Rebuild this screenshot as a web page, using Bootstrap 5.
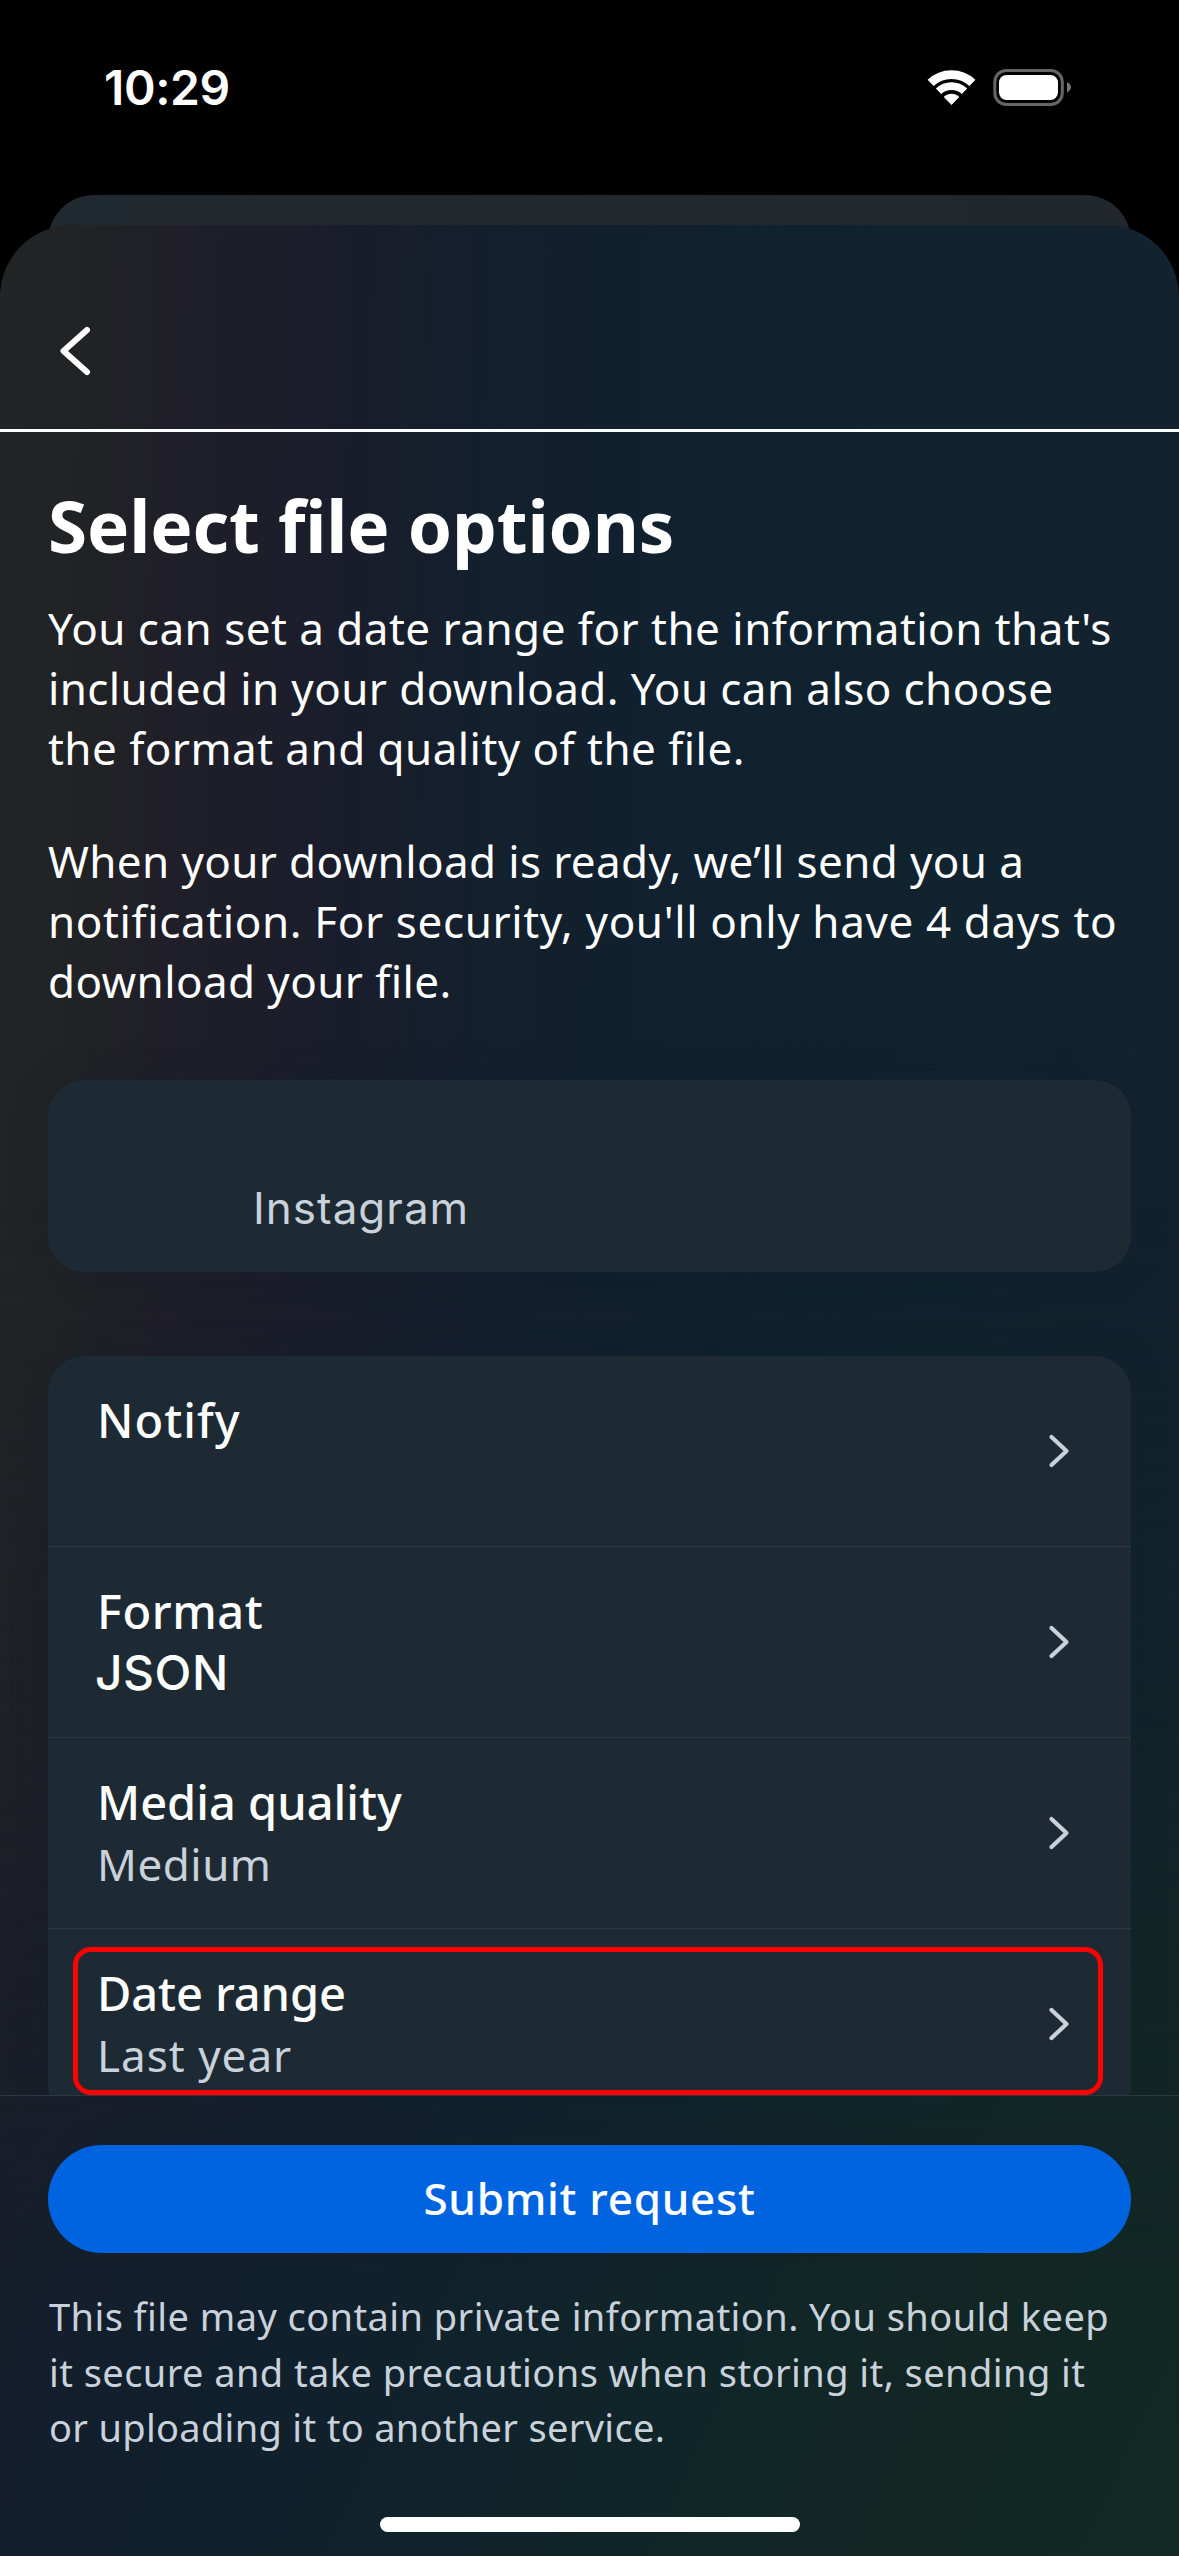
<!DOCTYPE html>
<html lang="en">
<head>
<meta charset="utf-8">
<meta name="viewport" content="width=device-width, initial-scale=1">
<title>Select file options</title>
<link href="https://cdn.jsdelivr.net/npm/bootstrap@5.3.0/dist/css/bootstrap.min.css" rel="stylesheet">
<style>
  body { background: #000; color: #fff; font-family: "Noto Sans", "Open Sans", sans-serif; }
  .phone { width: 1179px; height: 2556px; }
  .status { height: 195px; padding: 58px 106px 0 104px; }
  .clock { font: 600 48px/60px Inter, sans-serif; letter-spacing: -.4px; }
  .status svg { margin-top: 9px; }
  .peek { height: 120px; margin: 0 48px -90px; border-radius: 46px 46px 0 0; background: linear-gradient(90deg, #20292f, #22272d); }
  .sheet {
    border-radius: 72px 72px 0 0; isolation: isolate;
    background: linear-gradient(91deg, #212525 0, #212225 8%, #201f29 14%, #1a1d2b 28%, #13202e 42%, #10212f 62%, #10232e 78%, #13222f 100%);
  }
  .sheet::before {
    content: ""; position: absolute; inset: 0; z-index: -1;
    background: linear-gradient(115deg, #1d1e28 20%, #1a1d2a 36%, #111f2d 52%, #10222c 64%, #102528 74%, #122724 86%, #122825 100%);
    -webkit-mask-image: linear-gradient(180deg, transparent 42%, #000 88%);
    mask-image: linear-gradient(180deg, transparent 42%, #000 88%);
  }
  .top-bar { height: 207px; border-bottom: 3px solid #fafcff; padding: 99px 0 0 56px; }
  .content { padding: 52px 48px 0; }
  .heading { font-size: 71px; line-height: 84px; font-weight: 700; letter-spacing: -.15px; margin-bottom: 30px; }
  .copy { font-size: 44px; line-height: 60px; margin-bottom: 53px; }
  .copy span, .note span { display: block; white-space: nowrap; }
  .panel { background: #1d2a33; border-radius: 36px; box-shadow: 0 0 36px rgba(16, 32, 38, .25); }
  .account { height: 192px; margin: 69px 0 84px; padding: 98px 0 0 205px; color: #c9d1db; font: 400 44px/60px Inter, sans-serif; letter-spacing: 1px; }
  .option { height: 191px; padding: 33px 60px 0 49px; border-bottom: 1px solid #2b3840; }
  .option:last-child { border-bottom-color: transparent; }
  .option svg { margin-top: 44px; }
  .opt-name { font-size: 47px; line-height: 62px; font-weight: 500; }
  .opt-value { font-size: 44px; line-height: 62px; color: #c9d1db; }
  .opt-code { font: 500 48px/62px Inter, sans-serif; color: #fff; letter-spacing: .5px; margin-left: -2px; }
  .marker { position: absolute; left: 25px; top: 18px; width: 1030px; height: 148px; border: 5px solid #f00; border-radius: 18px; }
  .foot { height: 461px; border-top: 1px solid #2a3940; padding: 49px 48px 0; }
  .submit { height: 108px; border-radius: 54px; background: #0064e0; color: #fff; font-size: 44px; line-height: 60px; font-weight: 500; letter-spacing: .7px; border: 0; padding: 0 0 3px; }
  .note { font-size: 38px; line-height: 55.5px; margin: 36px 0 0 1px; color: #c9d1db; }
  .home-bar { width: 420px; height: 15px; border-radius: 8px; background: #fff; margin-bottom: 24px; }
</style>
</head>
<body>
<div class="phone d-flex flex-column overflow-hidden">
  <div class="status d-flex justify-content-between align-items-start flex-shrink-0">
    <div class="clock">10:29</div>
    <svg width="147" height="42" viewBox="926 67 147 42">
      <g fill="none" stroke="#fff">
        <path stroke-width="8.7" d="M930.6 82.9A30.3 30.3 0 0 1 972.4 82.9"/>
        <path stroke-width="7.6" d="M938.5 91.3A18.9 18.9 0 0 1 964.5 91.3"/>
      </g>
      <path fill="#fff" d="M951.5 105L944.3 97.6Q943.7 96.7 944.6 96.1Q951.5 91.5 958.4 96.1Q959.3 96.7 958.7 97.6Z"/>
      <rect x="994.8" y="70.5" width="67.5" height="34" rx="11.5" fill="none" stroke="#666" stroke-width="3"/>
      <rect x="999" y="75" width="59" height="25" rx="7.5" fill="#fff"/>
      <path d="M1067 82Q1071 84.500 1071 87.300Q1071 90 1067 92.500Z" fill="#777"/>
    </svg>
  </div>
  <div class="peek flex-shrink-0"></div>

  <div class="sheet position-relative d-flex flex-column flex-grow-1 overflow-hidden">
    <header class="top-bar flex-shrink-0">
      <svg class="d-block" width="38" height="54" viewBox="0 0 38 54" fill="none" stroke="#fff" stroke-width="6" stroke-linecap="round" stroke-linejoin="round"><path d="M31 6L7.500 27L31 48"/></svg>
    </header>

    <main class="content flex-grow-1 overflow-hidden">
      <h1 class="heading">Select file options</h1>
      <p class="copy">
        <span style="letter-spacing:.47px">You can set a date range for the information that's</span>
        <span style="letter-spacing:.4px">included in your download. You can also choose</span>
        <span style="letter-spacing:.45px">the format and quality of the file.</span>
      </p>
      <p class="copy mb-0">
        <span style="letter-spacing:.37px">When your download is ready, we’ll send you a</span>
        <span style="letter-spacing:.62px">notification. For security, you'll only have 4 days to</span>
        <span style="letter-spacing:.4px">download your file.</span>
      </p>

      <div class="panel account">Instagram</div>

      <div class="panel">
        <div class="option d-flex justify-content-between align-items-start">
          <div class="opt-name" style="letter-spacing:1px">Notify</div>
          <svg width="24" height="36" viewBox="0 0 24 36" fill="none" stroke="#c9d1db" stroke-width="4.200" stroke-linecap="round" stroke-linejoin="round"><path d="M4.500 4L19.500 18L4.500 32"/></svg>
        </div>
        <div class="option d-flex justify-content-between align-items-start">
          <div><div class="opt-name" style="letter-spacing:.6px">Format</div><div class="opt-code">JSON</div></div>
          <svg width="24" height="36" viewBox="0 0 24 36" fill="none" stroke="#c9d1db" stroke-width="4.200" stroke-linecap="round" stroke-linejoin="round"><path d="M4.500 4L19.500 18L4.500 32"/></svg>
        </div>
        <div class="option d-flex justify-content-between align-items-start">
          <div><div class="opt-name">Media quality</div><div class="opt-value" style="letter-spacing:.5px">Medium</div></div>
          <svg width="24" height="36" viewBox="0 0 24 36" fill="none" stroke="#c9d1db" stroke-width="4.200" stroke-linecap="round" stroke-linejoin="round"><path d="M4.500 4L19.500 18L4.500 32"/></svg>
        </div>
        <div class="option d-flex justify-content-between align-items-start position-relative">
          <div><div class="opt-name" style="letter-spacing:-.1px">Date range</div><div class="opt-value" style="letter-spacing:1px">Last year</div></div>
          <svg width="24" height="36" viewBox="0 0 24 36" fill="none" stroke="#c9d1db" stroke-width="4.200" stroke-linecap="round" stroke-linejoin="round"><path d="M4.500 4L19.500 18L4.500 32"/></svg>
          <div class="marker"></div>
        </div>
      </div>
    </main>

    <footer class="foot d-flex flex-column flex-shrink-0">
      <button class="submit btn w-100 flex-shrink-0" type="button">Submit request</button>
      <p class="note">
        <span style="letter-spacing:.42px">This file may contain private information. You should keep</span>
        <span style="letter-spacing:.42px">it secure and take precautions when storing it, sending it</span>
        <span style="letter-spacing:.3px">or uploading it to another service.</span>
      </p>
      <div class="home-bar mt-auto align-self-center flex-shrink-0"></div>
    </footer>
  </div>
</div>
<script src="https://cdn.jsdelivr.net/npm/bootstrap@5.3.0/dist/js/bootstrap.bundle.min.js"></script>
</body>
</html>
